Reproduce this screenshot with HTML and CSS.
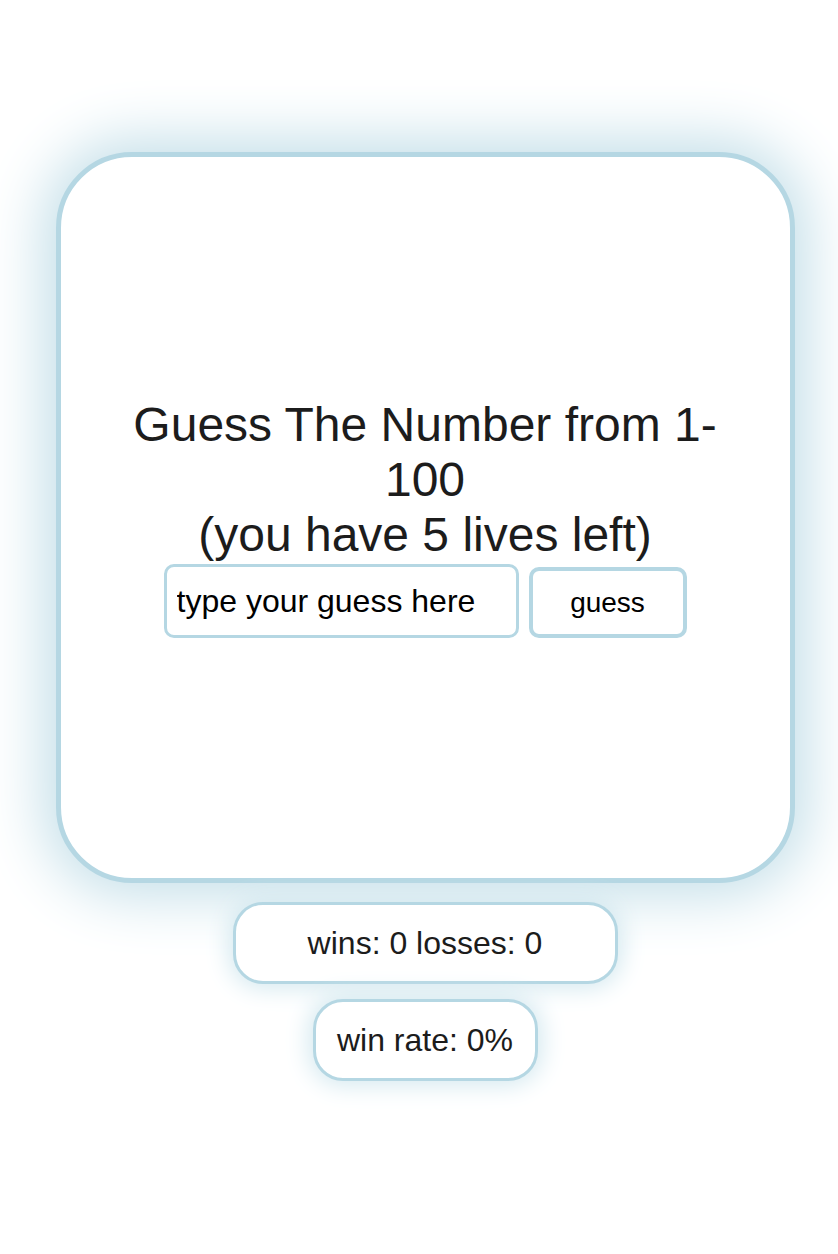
FILE: index.html
```html
<!DOCTYPE html>
<html>
<head>
<meta charset="utf-8">
<link rel="stylesheet" href="styles.css">
</head>
<body>
<main class="page">
  <section class="card">
    <h1 class="title">Guess The Number from 1-100<br>(you have 5 lives left)</h1>
    <div class="form">
      <input class="guess-input" type="text" placeholder="type your guess here">
      <button class="guess-btn">guess</button>
    </div>
  </section>
  <div class="stat stat-wide">wins: 0 losses: 0</div>
  <div class="stat stat-rate">win rate: 0%</div>
</main>
</body>
</html>
```
FILE: styles.css
```css
html, body {
  margin: 0;
  padding: 0;
  background: #ffffff;
}
body {
  font-family: "Liberation Sans", Arial, sans-serif;
  color: #1c1c1c;
}
.page {
  display: flex;
  flex-direction: column;
  align-items: center;
  padding: 152px 0 120px 12px;
}
.card {
  box-sizing: border-box;
  width: 739px;
  height: 731px;
  border: 5px solid #b5d7e3;
  border-radius: 76px;
  background: #fff;
  box-shadow: 0 0 60px 12px #c2dee8;
  display: flex;
  flex-direction: column;
  align-items: center;
  justify-content: center;
}
.title {
  margin: 0;
  width: 600px;
  font-size: 48px;
  font-weight: normal;
  line-height: 55px;
  text-align: center;
}
.form {
  display: flex;
  align-items: flex-end;
  gap: 10px;
  margin-top: 2px;
}
.guess-input {
  box-sizing: border-box;
  width: 355px;
  height: 74px;
  border: 3px solid #b5d7e3;
  border-radius: 10px;
  padding: 0 10px;
  font-family: "Liberation Sans", Arial, sans-serif;
  font-size: 32px;
  outline: none;
}
.guess-input::placeholder {
  color: #000;
  opacity: 1;
}
.guess-btn {
  box-sizing: border-box;
  width: 158px;
  height: 71px;
  border: 4px solid #b5d7e3;
  border-radius: 10px;
  background: #fff;
  font-family: "Liberation Sans", Arial, sans-serif;
  font-size: 28px;
  color: #000;
}
.stat {
  box-sizing: border-box;
  height: 82px;
  border: 3px solid #b5d7e3;
  border-radius: 30px;
  background: #fff;
  box-shadow: 0 0 24px 4px #d3e8ef;
  font-size: 32px;
  display: flex;
  align-items: center;
  justify-content: center;
}
.stat-wide {
  width: 385px;
  margin-top: 19px;
}
.stat-rate {
  width: 225px;
  margin-top: 15px;
}
```
